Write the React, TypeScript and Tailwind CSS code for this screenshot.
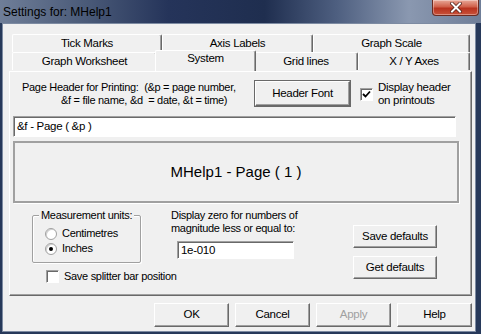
import React from 'react'

const FONT = { fontFamily: '"Liberation Sans", Arial, sans-serif' }

const bevel = 'border border-t-white border-l-white border-r-[#696969] border-b-[#696969] shadow-[inset_-1px_-1px_0_#a0a0a0]'
const sunken = 'border border-t-[#a0a0a0] border-l-[#a0a0a0] border-r-white border-b-white shadow-[inset_1px_1px_0_#696969]'

function Btn({ label, w = 'w-[75px]', h = 'h-[24px]', disabled = false, extra = '' }: { label: string; w?: string; h?: string; disabled?: boolean; extra?: string }) {
  return (
    <div className={`${w} ${h} ${bevel} ${extra} bg-[#f0f0f0] flex items-center justify-center text-[11.5px] tracking-[-0.3px] whitespace-nowrap ${disabled ? 'text-[#a0a0a0]' : 'text-black'}`}>
      {label}
    </div>
  )
}

function Check({ checked }: { checked?: boolean }) {
  return (
    <div className={`w-[13px] h-[13px] bg-white ${sunken} flex items-center justify-center shrink-0`}>
      {checked && (
        <svg width="9" height="9" viewBox="0 0 9 9">
          <path d="M1 4 L3.5 6.5 L8 1.5" stroke="#000" strokeWidth="1.8" fill="none" />
        </svg>
      )}
    </div>
  )
}

function Radio({ checked }: { checked?: boolean }) {
  return (
    <div className="w-[12px] h-[12px] rounded-full bg-white border border-[#a0a0a0] shadow-[inset_1px_1px_0_#d0d0d0] flex items-center justify-center shrink-0">
      {checked && <div className="w-[4px] h-[4px] rounded-full bg-black" />}
    </div>
  )
}

function Tab({ label, w, selected = false }: { label: string; w: string; selected?: boolean }) {
  return (
    <div
      className={`${w} ${selected ? 'h-[21px] -mt-[2px] -mx-[2px] relative z-10 pb-[4px]' : 'h-[18px]'} shadow-[inset_-1px_0_0_#a0a0a0] bg-[#f0f0f0] border border-t-white border-l-white border-r-[#696969] border-b-0 rounded-t-[2px] flex items-center justify-center text-[11.5px] tracking-[-0.3px] whitespace-nowrap text-black`}
    >
      {label}
    </div>
  )
}

export default function App() {
  return (
    <div style={FONT} className="w-[481px] h-[334px] bg-[#27395a] flex flex-col overflow-hidden">
      {/* title bar */}
      <div className="h-[23px] shrink-0 relative flex items-center pl-[3px] bg-[linear-gradient(90deg,#6f7e98_0%,#4a5a78_18%,#25345a_35%,#1f2e4f_55%,#4e5f80_70%,#8a98b0_85%,#6f7e98_100%)]">
        <span className="text-[12px] text-black">Settings for: MHelp1</span>
        <div className="absolute right-[2px] top-0 w-[47px] h-[16px] rounded-b-[4px] border border-t-0 border-[#6b2a20] bg-[linear-gradient(180deg,#e8a898_0%,#d0604a_45%,#b8321e_55%,#c9523a_100%)] flex items-center justify-center shadow-[inset_0_0_0_1px_rgba(255,255,255,0.35)]">
          <svg width="12" height="11" viewBox="0 0 12 11">
            <path d="M2 1.5 L10 9.5 M10 1.5 L2 9.5" stroke="#4a1a12" strokeWidth="3.4" strokeLinecap="square" />
            <path d="M2 1.5 L10 9.5 M10 1.5 L2 9.5" stroke="#fff" strokeWidth="2" strokeLinecap="square" />
          </svg>
        </div>
      </div>

      {/* body */}
      <div className="ml-[2px] w-[474px] h-[309px] bg-[#f0f0f0] border border-[#7d8ba2] pl-[6px] pt-[10px] text-black">
        {/* tabs */}
        <div className="w-[463px] pl-[3px]">
          <div className="flex">
            <Tab label="Tick Marks" w="w-[150px]" />
            <Tab label="Axis Labels" w="w-[151px]" />
            <Tab label="Graph Scale" w="w-[157px]" />
          </div>
          <div className="flex">
            <Tab label="Graph Worksheet" w="w-[145px]" />
            <Tab label="System" w="w-[101px]" selected />
            <Tab label="Grid lines" w="w-[104px]" />
            <Tab label="X / Y Axes" w="w-[112px]" />
          </div>
        </div>

        {/* panel */}
        <div className={`w-[463px] h-[225px] ${bevel} text-[11px] tracking-[-0.3px] whitespace-nowrap`}>
          {/* header row */}
          <div className="flex mt-[9px]">
            <div className="w-[245px] pl-[12px] leading-[13px]">
              <div>Page Header for Printing:&nbsp; (&amp;p = page number,</div>
              <div className="pl-[39px]">&amp;f = file name, &amp;d&nbsp; = date, &amp;t = time)</div>
            </div>
            <Btn label="Header Font" w="w-[95px]" h="h-[25px]" extra="outline outline-1 outline-[#696969]" />
            <div className="ml-[10px] mt-[7px]">
              <Check checked />
            </div>
            <div className="ml-[5px] leading-[13px] text-[11.5px]">
              <div>Display header</div>
              <div>on printouts</div>
            </div>
          </div>

          {/* header text input */}
          <div className={`ml-[3px] mt-[9px] w-[443px] h-[21px] bg-white ${sunken} flex items-center pl-[3px] text-[11.5px]`}>
            &amp;f - Page ( &amp;p )
          </div>

          {/* preview */}
          <div className="ml-[3px] mt-[4px] w-[446px] h-[62px] border-2 border-[#a0a0a0] shadow-[1px_1px_0_#fff] flex items-center justify-center text-[15px] tracking-normal">
            MHelp1 - Page ( 1 )
          </div>

          {/* lower section */}
          <div className="flex mt-[8px]">
            <div className="ml-[22px] w-[109px]">
              <div className="relative mt-[4px] w-[109px] h-[48px] border border-[#a0a0a0] shadow-[1px_1px_0_#fff,inset_1px_1px_0_#fff] rounded-[2px] pt-[10px] pl-[12px]">
                <div className="absolute -top-[8px] left-[6px] px-[2px] bg-[#f0f0f0] leading-[14px]">Measurement units:</div>
                <div className="flex items-center gap-[5px] h-[15px]">
                  <Radio />
                  <span>Centimetres</span>
                </div>
                <div className="flex items-center gap-[5px] h-[15px]">
                  <Radio checked />
                  <span>Inches</span>
                </div>
              </div>
              <div className="flex items-center gap-[5px] ml-[14px] mt-[5px]">
                <Check />
                <span>Save splitter bar position</span>
              </div>
            </div>

            <div className="ml-[30px] -mt-[2px] w-[150px] leading-[13px]">
              <div>Display zero for numbers of</div>
              <div>magnitude less or equal to:</div>
              <div className={`ml-[6px] mt-[6px] w-[117px] h-[18px] bg-white ${sunken} flex items-center pl-[3px] text-[11.5px]`}>1e-010</div>
            </div>

            <div className="ml-[32px] flex flex-col gap-[8px] mt-[14px]">
              <Btn label="Save defaults" w="w-[84px]" h="h-[23px]" />
              <Btn label="Get defaults" w="w-[84px]" h="h-[23px]" />
            </div>
          </div>
        </div>

        {/* dialog buttons */}
        <div className="w-[463px] flex justify-end gap-[6px] mt-[7px]">
          <Btn label="OK" />
          <Btn label="Cancel" />
          <Btn label="Apply" disabled />
          <Btn label="Help" />
        </div>
      </div>
    </div>
  )
}
